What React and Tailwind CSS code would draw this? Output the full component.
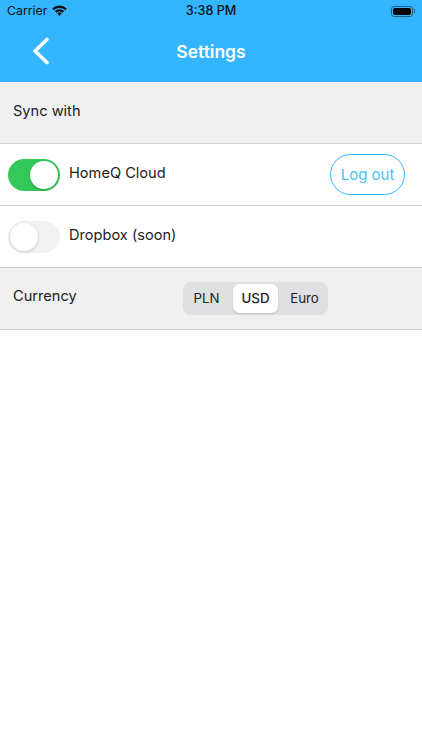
import React from "react";

function Wifi() {
  return (
    <svg width="15" height="11" viewBox="0 0 15 11" className="ml-[5px] -mt-[1px]">
      <path d="M0.2 3.6 A10.4 10.4 0 0 1 14.8 3.6 L13.2 5.3 A8 8 0 0 0 1.8 5.3 Z" fill="#111" />
      <path d="M2.9 6.1 A6.6 6.6 0 0 1 12.1 6.1 L10.6 7.7 A4.4 4.4 0 0 0 4.4 7.7 Z" fill="#111" />
      <path d="M5.2 8.4 A3.2 3.2 0 0 1 9.8 8.4 L7.5 10.9 Z" fill="#111" />
    </svg>
  );
}

function Toggle({ on }) {
  return (
    <div className={on
      ? "w-[52px] h-[32px] rounded-full bg-[#34c759] flex items-center justify-end pr-[2px]"
      : "w-[52px] h-[32px] rounded-full bg-[#f2f2f2] flex items-center justify-start pl-[2px]"}>
      <div className="w-[28px] h-[28px] rounded-full bg-white shadow-[0_1px_3px_rgba(0,0,0,0.2)]" />
    </div>
  );
}

export default function App() {
  return (
    <div className="w-[422px] h-[750px] bg-white font-['Inter','Liberation_Sans',sans-serif] text-[#222] overflow-hidden">
      <header className="h-[82px] bg-[#33b5ff] flex flex-col">
        <div className="h-[22px] pl-[7px] pr-[7px] grid grid-cols-3 items-center text-[#111]">
          <div className="flex items-center text-[12.3px]">Carrier<Wifi /></div>
          <div className="text-center text-[12.6px] font-medium">3:38 PM</div>
          <div className="flex justify-end items-center">
            <div className="w-[22px] h-[11px] rounded-[3px] border border-[#1d5f85] p-[1px]">
              <div className="w-full h-full rounded-[2px] bg-black" />
            </div>
            <div className="w-[1px] h-[4px] bg-[#1d5f85] ml-[1px]" />
          </div>
        </div>
        <div className="relative flex-1 flex items-center justify-center">
          <svg width="20" height="30" viewBox="0 0 20 30" className="absolute left-[31px] top-[14px]">
            <path d="M16 3.5 L4 15 L16 26.5" fill="none" stroke="#fff" strokeWidth="3.6" strokeLinecap="round" strokeLinejoin="round" />
          </svg>
          <span className="text-white text-[17.5px] font-semibold">Settings</span>
        </div>
      </header>

      <section className="h-[62px] bg-[#f0f0f0] border-b border-[#cfcfcf] flex items-center pl-[13px] text-[14.6px]">
        <span className="-mt-[2px]">Sync with</span>
      </section>

      <section className="h-[62px] border-b border-[#cfcfcf] flex items-center pl-[8px] pr-[17px]">
        <Toggle on />
        <span className="ml-[9px] text-[14.6px] -mt-[2px]">HomeQ Cloud</span>
        <button className="ml-auto w-[75px] h-[41px] pt-[1px] rounded-full border border-[#33b5ff] text-[#4dbdf5] text-[15px]">Log out</button>
      </section>

      <section className="h-[62px] border-b border-[#cfcfcf] flex items-center pl-[8px]">
        <Toggle />
        <span className="ml-[9px] text-[14.6px] -mt-[2px]">Dropbox (soon)</span>
      </section>

      <section className="h-[62px] bg-[#f0f0f0] border-b border-[#cfcfcf] flex items-center pl-[13px] text-[14.6px]">
        <span className="w-[170px] -mt-[3px]">Currency</span>
        <div className="h-[33px] w-[145px] rounded-[8px] bg-[#e0e0e2] flex items-center text-[13.3px] text-[#222]">
          <span className="w-[50px] pr-[3px] text-center">PLN</span>
          <span className="w-[45px] h-[29px] rounded-[7px] bg-white flex items-center justify-center font-medium shadow-[0_1px_2px_rgba(0,0,0,0.15)]">USD</span>
          <span className="w-[50px] pl-[3px] text-center">Euro</span>
        </div>
      </section>
    </div>
  );
}
